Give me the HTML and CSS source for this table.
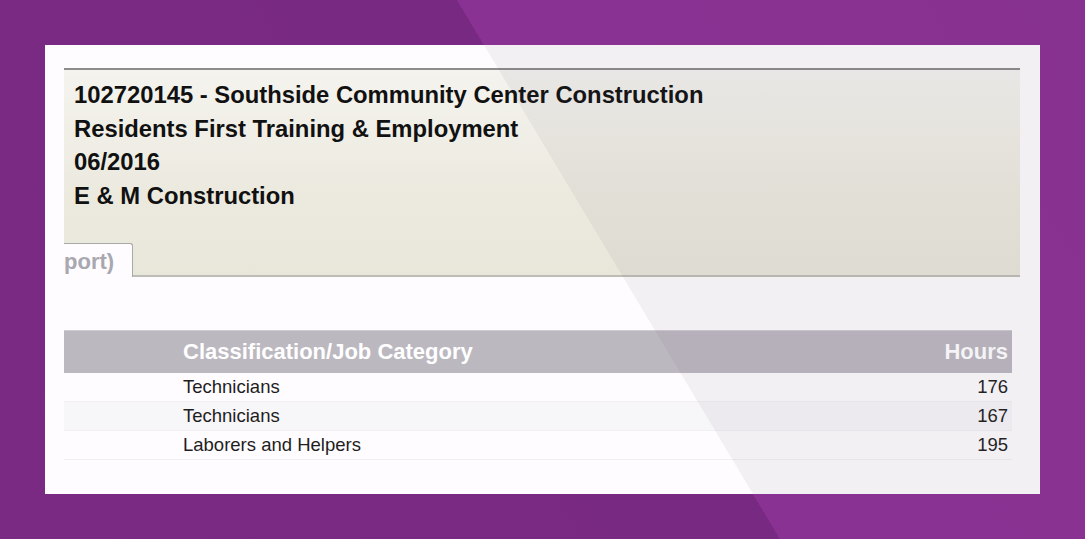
FILE: index.html
```html
<!DOCTYPE html>
<html lang="en">
<head>
<meta charset="utf-8">
<title>Certified Payroll</title>
<link rel="stylesheet" href="styles.css">
</head>
<body>
<main class="card">
  <section class="header">
    <div class="info">
      <div class="line">102720145 - Southside Community Center Construction</div>
      <div class="line">Residents First Training &amp; Employment</div>
      <div class="line">06/2016</div>
      <div class="line">E &amp; M Construction</div>
    </div>
    <div class="tabs">
      <div class="tab">port)</div>
    </div>
  </section>
  <table class="grid">
    <thead>
      <tr><th class="c0"></th><th class="c1">Classification/Job Category</th><th class="c2">Hours</th></tr>
    </thead>
    <tbody>
      <tr><td class="c0"></td><td class="c1">Technicians</td><td class="c2">176</td></tr>
      <tr class="alt"><td class="c0"></td><td class="c1">Technicians</td><td class="c2">167</td></tr>
      <tr><td class="c0"></td><td class="c1">Laborers and Helpers</td><td class="c2">195</td></tr>
    </tbody>
  </table>
</main>
</body>
</html>
```
FILE: styles.css
```css
html {
  height: 100%;
  background: linear-gradient(59.07deg, #7a2a82 0, #782981 669px, #8a3293 669px, #873190 100%);
}
body {
  margin: 0;
  padding: 45px;
  font-family: "Liberation Sans", Arial, sans-serif;
}
.card {
  position: relative;
  width: 995px;
  height: 449px;
  box-sizing: border-box;
  background: #fefcfe;
  padding: 23px 20px 0 19px;
}
.card::after {
  content: "";
  position: absolute;
  inset: 0;
  background: rgba(90, 70, 100, 0.065);
  clip-path: polygon(439px 0, 100% 0, 100% 100%, 708px 100%);
  pointer-events: none;
}
.header {
  height: 205px;
  border-top: 2px solid #8d8d8b;
  border-bottom: 2px solid #bdbdb6;
  background: linear-gradient(180deg, #f4f3ee 0%, #eceadf 60%, #e8e7da 100%);
  display: flex;
  flex-direction: column;
}
.info {
  padding: 8px 10px 0;
}
.line {
  font-size: 23.8px;
  line-height: 33.5px;
  font-weight: bold;
  color: #111;
  white-space: nowrap;
}
.tabs {
  margin-top: auto;
  display: flex;
  margin-bottom: -2px;
}
.tab {
  width: 48px;
  height: 33px;
  padding-right: 20px;
  background: #fefcfe;
  border: 1px solid #a8a8a4;
  border-left: none;
  border-bottom: none;
  border-top-right-radius: 3px;
  font-size: 22px;
  font-weight: bold;
  line-height: 36px;
  color: #a9a7b0;
  overflow: hidden;
  white-space: nowrap;
}
.grid {
  margin-top: 53px;
  width: 948px;
  border-collapse: collapse;
}
.grid th {
  height: 42px;
  padding: 0;
  background: #bcb8c0;
  border-top: 1px solid #cfcbd2;
  color: #ffffff;
  font-size: 22px;
  font-weight: bold;
  text-align: left;
}
.grid td {
  height: 28px;
  padding: 0;
  font-size: 18.5px;
  color: #1e1e1e;
  border-bottom: 1px solid #f1eff2;
}
.grid .alt td {
  background: #f7f6f8;
}
.c0 { width: 109px; }
.grid .c1 { padding-left: 10px; }
.grid .c2 { text-align: right; padding-right: 4px; }
```
